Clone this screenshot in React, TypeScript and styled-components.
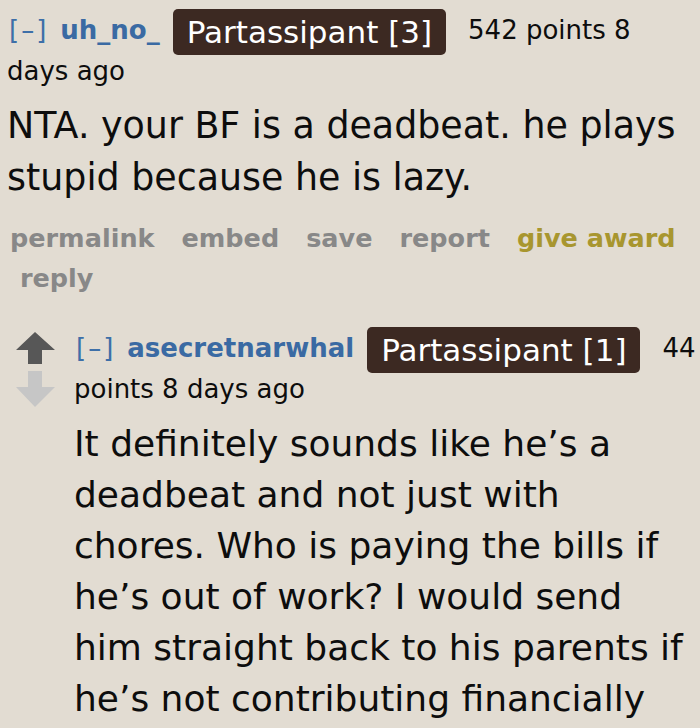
import React from "react";
import styled, { createGlobalStyle } from "styled-components";

const Global = createGlobalStyle`
  html, body {
    margin: 0;
    padding: 0;
    background: #e2dcd2;
  }
  body {
    font-family: "DejaVu Sans", Verdana, sans-serif;
    color: #0d0d0d;
  }
`;

const Page = styled.div`
  width: 700px;
  height: 728px;
  overflow: hidden;
  box-sizing: border-box;
  padding: 10px 3px 0 7px;
  background: #e2dcd2;
`;

const Comment = styled.div`
  display: flex;
  flex-direction: column;
`;

const ChildRow = styled.div`
  display: flex;
  margin-top: 30px;
`;

const Votes = styled.div`
  width: 40px;
  flex: 0 0 40px;
  margin-left: 9px;
  margin-right: 18px;
  padding-top: 4px;
  display: flex;
  flex-direction: column;
  gap: 1px;
`;

const ChildBody = styled.div`
  flex: 1;
  min-width: 0;
`;

const Tagline = styled.div`
  font-size: 26px;
  line-height: 41px;
`;

const Expand = styled.span`
  color: #3d6fa8;
  letter-spacing: 2px;
  margin-left: 2px;
  margin-right: 12px;
`;

const Author = styled.span`
  color: #3a6aa3;
  font-weight: bold;
  margin-right: 13px;
`;

const Flair = styled.span`
  display: inline-block;
  vertical-align: middle;
  background: #3c2922;
  color: #ffffff;
  font-size: 31px;
  line-height: 36px;
  padding: 5px 14px;
  border-radius: 5px;
  margin: -6px 22px -6px 0;
`;

const Body = styled.p<{ $lh: number; $size: number }>`
  margin: 8px 0 0;
  font-size: ${(p) => p.$size}px;
  line-height: ${(p) => p.$lh}px;
`;

const Buttons = styled.ul`
  list-style: none;
  margin: 14px 0 0;
  padding: 0 0 0 3px;
  display: flex;
  flex-wrap: wrap;
  column-gap: 27px;
  font-size: 25.5px;
  line-height: 40px;
  font-weight: bold;
`;

const Button = styled.li<{ $award?: boolean; $indent?: boolean }>`
  color: ${(p) => (p.$award ? "#a8962f" : "#888888")};
  margin-left: ${(p) => (p.$indent ? "10px" : "0")};
`;

const Arrow = ({ up, color }: { up: boolean; color: string }) => (
  <svg width="40" height="38" viewBox="0 0 40 38">
    {up ? (
      <path d="M19 0 L39 18 L26 18 L26 32 L12 32 L12 18 L0 18 Z" fill={color} />
    ) : (
      <path d="M12 0 L26 0 L26 16 L39 16 L19 36 L0 16 L12 16 Z" fill={color} />
    )}
  </svg>
);

export default function App() {
  return (
    <>
      <Global />
      <Page>
        <Comment>
          <Tagline>
            <Expand>[–]</Expand>
            <Author>uh_no_</Author>
            <Flair>Partassipant [3]</Flair>
            542 points 8 days ago
          </Tagline>
          <Body $lh={52} $size={36.4}>
            NTA. your BF is a deadbeat. he plays stupid because he is lazy.
          </Body>
          <Buttons>
            <Button>permalink</Button>
            <Button>embed</Button>
            <Button>save</Button>
            <Button>report</Button>
            <Button $award>give award</Button>
            <Button $indent>reply</Button>
          </Buttons>
        </Comment>
        <ChildRow>
          <Votes>
            <Arrow up color="#575757" />
            <Arrow up={false} color="#c6c6c6" />
          </Votes>
          <ChildBody>
            <Tagline>
              <Expand>[–]</Expand>
              <Author>asecretnarwhal</Author>
              <Flair>Partassipant [1]</Flair>
              44 points 8 days ago
            </Tagline>
            <Body $lh={51} $size={36}>
              It definitely sounds like he’s a deadbeat and not just with
              chores. Who is paying the bills if he’s out of work? I would send
              him straight back to his parents if he’s not contributing
              financially
            </Body>
          </ChildBody>
        </ChildRow>
      </Page>
    </>
  );
}
